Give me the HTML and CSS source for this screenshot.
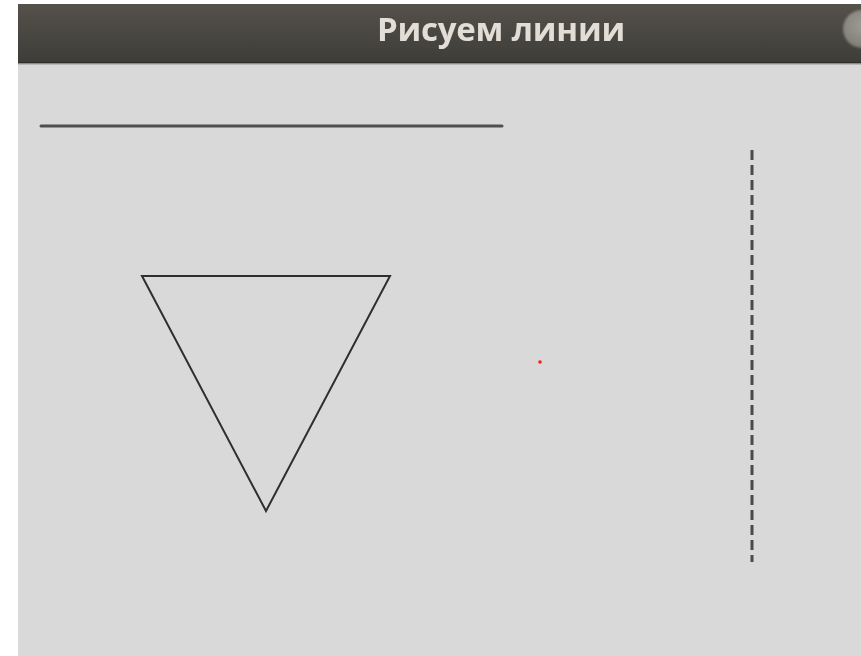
FILE: index.html
```html
<!DOCTYPE html>
<html lang="ru">
<head>
<meta charset="utf-8">
<title>Рисуем линии</title>
<link rel="stylesheet" href="styles.css">
</head>
<body>
  <div class="window">
    <header class="titlebar">
      <h1 class="title">Рисуем линии</h1>
      <span class="btn-close" aria-hidden="true"></span>
    </header>
    <main class="canvas">
      <svg class="drawing" width="843" height="591" viewBox="0 0 843 591">
        <!-- plain line -->
        <line class="stroke-wide" x1="23" y1="61" x2="484" y2="61"/>
        <!-- triangle -->
        <polygon class="stroke-thin" points="124,211 372,211 248,446"/>
        <!-- single red point -->
        <circle class="dot" cx="522" cy="297" r="1.8"/>
        <!-- dashed vertical line -->
        <line class="stroke-dash" x1="734" y1="85" x2="734" y2="497"/>
      </svg>
    </main>
  </div>
</body>
</html>
```

FILE: styles.css
```css
html, body {
  margin: 0;
  padding: 0;
  background: #ffffff;
  overflow: hidden;
  width: 861px;
  height: 656px;
}

.window {
  margin: 4px 0 0 18px;
  width: 843px;
  height: 652px;
  overflow: hidden;
  display: flex;
  flex-direction: column;
}

.titlebar {
  position: relative;
  flex: 0 0 58px;
  display: flex;
  align-items: flex-start;
  justify-content: center;
  padding-left: 123px;
  background: linear-gradient(to bottom, #55514b 0%, #4a4842 45%, #3e3d39 100%);
  border-bottom: 1px solid #2e2d2a;
  box-shadow: 0 1px 0 #8d8b86, 0 2px 0 #b9b8b5;
}

.title {
  margin: 0;
  padding-top: 2px;
  line-height: 46px;
  font-family: "Open Sans", "DejaVu Sans", sans-serif;
  font-weight: 700;
  font-size: 33px;
  letter-spacing: -0.2px;
  color: #e2ddd5;
  filter: blur(0.6px);
}

.btn-close {
  position: absolute;
  left: 825px;
  top: 6px;
  width: 38px;
  height: 38px;
  border-radius: 50%;
  background: radial-gradient(circle at 50% 40%, #9e9b93 0%, #88857e 60%, #6c6a64 100%);
  filter: blur(1.2px);
}

.canvas {
  flex: 1 1 auto;
  margin-top: 2px;
  background: #d9d9d9;
}

.drawing {
  display: block;
  filter: blur(0.5px);
}

.stroke-wide {
  stroke: #4f4f4f;
  stroke-width: 3;
  stroke-linecap: round;
}

.stroke-thin {
  fill: none;
  stroke: #2f2f2f;
  stroke-width: 2;
  stroke-linejoin: miter;
}

.stroke-dash {
  stroke: #4a4a4a;
  stroke-width: 3;
  stroke-dasharray: 10 5;
}

.dot {
  fill: #ff1a1a;
}
```
